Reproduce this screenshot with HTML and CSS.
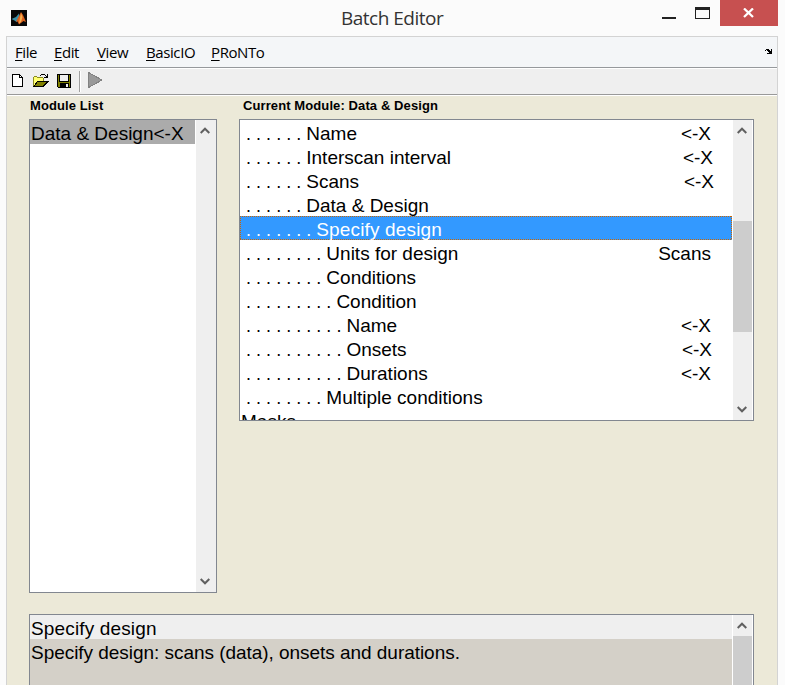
FILE: index.html
```html
<!DOCTYPE html>
<html lang="en">
<head>
<meta charset="utf-8">
<title>Batch Editor</title>
<link rel="stylesheet" href="styles.css">
</head>
<body>
<header class="titlebar">
  <svg class="logo" width="16" height="16" viewBox="0 0 16 16"><rect width="16" height="16" fill="#080808"/><path d="M0.500 9 5 7 8 3.500 8.500 7 5.500 12 3.500 10.500Z" fill="#3b8fa8"/><path d="M5 11.500 8 6 10 2 12 5 15 12 12.500 11 8 14.500 6.500 11.500Z" fill="#d95f1c"/><path d="M10 3 11.500 7 10 12 8 13.500 9 8Z" fill="#f5b050"/></svg>
  <h1>Batch Editor</h1>
  <div class="controls">
    <svg width="58" height="26" viewBox="0 0 58 26" shape-rendering="crispEdges"><path d="M0 17h14v2H0zM33 7h15v12H33zM34 10v8h13v-8z" fill="#222" fill-rule="evenodd"/></svg>
    <div class="close"><svg width="12" height="10" viewBox="0 0 12 10"><path d="M1 0.500 10 9M10 0.500 1 9" stroke="#fff" stroke-width="2.300"/></svg></div>
  </div>
</header>
<main class="window">
  <nav class="menu">
    <span class="file"><u>F</u>ile</span><span class="edit"><u>E</u>dit</span><span class="view"><u>V</u>iew</span><span class="basic"><u>B</u>asicIO</span><span class="pronto"><u>P</u>RoNTo</span>
    <svg class="dock" width="8" height="6" viewBox="0 0 8 6" shape-rendering="crispEdges"><path d="M0 1h1V0h3v1h1v1h1V0h1v5H2V4h2V3H3V2H2V1H1v1H0z"/></svg>
  </nav>
  <div class="toolbar">
    <svg width="110" height="25" viewBox="6 69 110 25" shape-rendering="crispEdges">
      <path d="M12.500 74.500h7l3 3v9h-10z" fill="#fff" stroke="#000"/><path d="M19.500 74.500v3h3" fill="none" stroke="#000"/>
      <path d="M33 77h4v1h6v3h-5l-4 5h-1z" fill="#ffff70"/><path d="M33 77h1v9h-1zM34 76h3v1h-3zM37 77h6v1h-6zM43 78h1v3h-1z" fill="#8a8a20"/>
      <path d="M34 86l4-5h10.500l-5 5z" fill="#808000" stroke="#000"/><path d="M40 75h1v1h-1zM41 74h4v1h-4zM45 75h1v1h-1zM47 74h1v4h-4v-1h2v-1h1z"/>
      <path d="M57.500 74.500h13v13h-12l-1-1z" fill="#808000" stroke="#000"/><path d="M60 75h8v6h-8z" fill="#efefef"/><path d="M59 75h1v6h8v-6h1v7H59zM60 83h9v4h-9z"/><path d="M66 84h2v3h-2z" fill="#efefef"/>
      <path d="M79 71h1v21h-1z" fill="#a0a0a0"/><path d="M80 71h1v21h-1z" fill="#fff"/>
      <path d="M88.500 72.500 102 80 88.500 87.500z" fill="#999" stroke="#828282"/>
    </svg>
  </div>
  <section class="content">
    <div class="lists">
      <div class="modules">
        <h2>Module List</h2>
        <div class="box module-box">
          <div class="rows"><div class="row picked">Data &amp; Design&lt;-X</div></div>
          <div class="scroll"><svg class="chev" viewBox="0 0 10 8"><path d="M0.700 6 5 1.700 9.300 6"/></svg><svg class="chev down" viewBox="0 0 10 8"><path d="M0.700 2 5 6.300 9.300 2"/></svg></div>
        </div>
      </div>
      <div class="current">
        <h2>Current Module: Data &amp; Design</h2>
        <div class="box current-box">
          <div class="rows">
            <div class="row"><i>. . . . . . </i><span>Name</span><b>&lt;-X</b></div>
            <div class="row"><i>. . . . . . </i><span>Interscan interval</span><b class="shift2">&lt;-X</b></div>
            <div class="row"><i>. . . . . . </i><span>Scans</span><b class="shift3">&lt;-X</b></div>
            <div class="row"><i>. . . . . . </i><span>Data &amp; Design</span></div>
            <div class="row selected"><i>. . . . . . . </i><span>Specify design</span></div>
            <div class="row"><i>. . . . . . . . </i><span>Units for design</span><b>Scans</b></div>
            <div class="row"><i>. . . . . . . . </i><span>Conditions</span></div>
            <div class="row"><i>. . . . . . . . . </i><span>Condition</span></div>
            <div class="row"><i>. . . . . . . . . . </i><span>Name</span><b>&lt;-X</b></div>
            <div class="row"><i>. . . . . . . . . . </i><span>Onsets</span><b class="shift1">&lt;-X</b></div>
            <div class="row"><i>. . . . . . . . . . </i><span>Durations</span><b>&lt;-X</b></div>
            <div class="row"><i>. . . . . . . . </i><span>Multiple conditions</span></div>
            <div class="row"><span>Masks</span></div>
          </div>
          <div class="scroll"><svg class="chev" viewBox="0 0 10 8"><path d="M0.700 6 5 1.700 9.300 6"/></svg><div class="thumb"></div><svg class="chev down" viewBox="0 0 10 8"><path d="M0.700 2 5 6.300 9.300 2"/></svg></div>
        </div>
      </div>
    </div>
    <div class="box help">
      <div class="rows"><div class="row head">Specify design</div><div class="row text">Specify design: scans (data), onsets and durations.</div></div>
      <div class="scroll"><svg class="chev" viewBox="0 0 10 8"><path d="M0.700 6 5 1.700 9.300 6"/></svg><div class="thumb"></div></div>
    </div>
  </section>
</main>
</body>
</html>
```
FILE: styles.css
```css
* { box-sizing: border-box; }
body { margin: 0; height: 685px; overflow: hidden; background: #fbfbfb; color: #000; font-family: "Liberation Sans", Arial, sans-serif; }
svg { display: block; flex: none; }
.titlebar { height: 36px; padding-left: 11px; display: flex; align-items: flex-start; }
.logo { margin-top: 10px; }
h1 { margin: 4px 0 0 314px; font: 400 19px/28px "Open Sans", "Noto Sans", sans-serif; letter-spacing: -0.5px; color: #333; white-space: nowrap; }
.controls { margin-left: auto; padding-right: 7px; display: flex; }
.close { width: 58px; height: 26px; background: #c75050; display: flex; align-items: center; justify-content: center; }
.window { margin-left: 6px; width: 772px; height: 649px; border: 1px solid #d3d3d3; border-bottom: 0; overflow: hidden; }
.menu { height: 32px; background: #f4f6f8; border-bottom: 1px solid #fff; box-shadow: inset 0 -1px #96999c; display: flex; padding-left: 8px; font: 15px/31px "Open Sans", "Noto Sans", sans-serif; letter-spacing: -0.4px; }
.menu span { white-space: nowrap; }
.menu u { text-underline-offset: 2px; text-decoration-thickness: 1px; }
.file { width: 39px; }
.edit { width: 43px; }
.view { width: 49px; }
.basic { width: 65px; }
.dock { margin: 12px 4px 0 auto; }
.toolbar { height: 27px; background: #efefef; border-bottom: 1px solid #fff; box-shadow: inset 0 -1px #999; }
.toolbar svg { margin-left: -1px; }
.content { height: 589px; background: #ece9d8; padding: 0 0 0 22px; }
.lists { display: flex; gap: 22px; height: 518px; }
h2 { margin: 0; height: 23px; font-size: 13px; line-height: 19px; letter-spacing: 0.1px; padding-left: 1px; white-space: nowrap; }
.current h2 { padding-left: 4px; }
.box { display: flex; border: 1px solid #828790; background: #fff; overflow: hidden; }
.module-box { width: 188px; height: 474px; }
.current-box { width: 515px; height: 302px; }
.rows { flex: 1; min-width: 0; font-size: 19px; }
.row { height: 24px; line-height: 28px; padding-left: 1px; display: flex; white-space: pre; }
.row i { font-style: normal; font-size: 18px; letter-spacing: 0.020px; padding-left: 5px; }
.row b { margin-left: auto; padding-right: 21px; font-weight: 400; }
.row .shift1 { padding-right: 20px; }
.row .shift2 { padding-right: 19px; }
.row .shift3 { padding-right: 18px; }
.picked { background: #ababab; margin-right: 1px; }
.selected {
  color: #fff;
  background-color: #3399ff;
  background-image:
    repeating-linear-gradient(90deg, #cc6600 0 1px, transparent 1px 2px),
    repeating-linear-gradient(90deg, #cc6600 0 1px, transparent 1px 2px),
    repeating-linear-gradient(#cc6600 0 1px, transparent 1px 2px),
    repeating-linear-gradient(#cc6600 0 1px, transparent 1px 2px);
  background-size: 100% 1px, 100% 1px, 1px 100%, 1px 100%;
  background-position: 0 0, 0 100%, 0 0, 100% 0;
  background-repeat: no-repeat;
}
.selected span { letter-spacing: 0.15px; }
.scroll { width: 20px; background: #efefef; display: flex; flex-direction: column; align-items: center; }
.module-box .scroll { padding-right: 1px; }
.current .scroll, .help .scroll { width: 21px; border: solid #fff; border-width: 0 1px; }
.chev { width: 10px; height: 8px; margin-top: 7px; margin-right: 1px; fill: none; stroke: #606060; stroke-width: 2; }
.chev.down { margin-top: auto; margin-bottom: 7px; }
.thumb { width: 19px; height: 111px; margin-top: 86px; background: #cdcdcd; }
.help { width: 725px; height: 90px; background: #d4d0c8; }
.help .head { background: #efefef; letter-spacing: 0.15px; }
.help .text { letter-spacing: -0.040px; }
.help .thumb { margin-top: 6px; }
```
